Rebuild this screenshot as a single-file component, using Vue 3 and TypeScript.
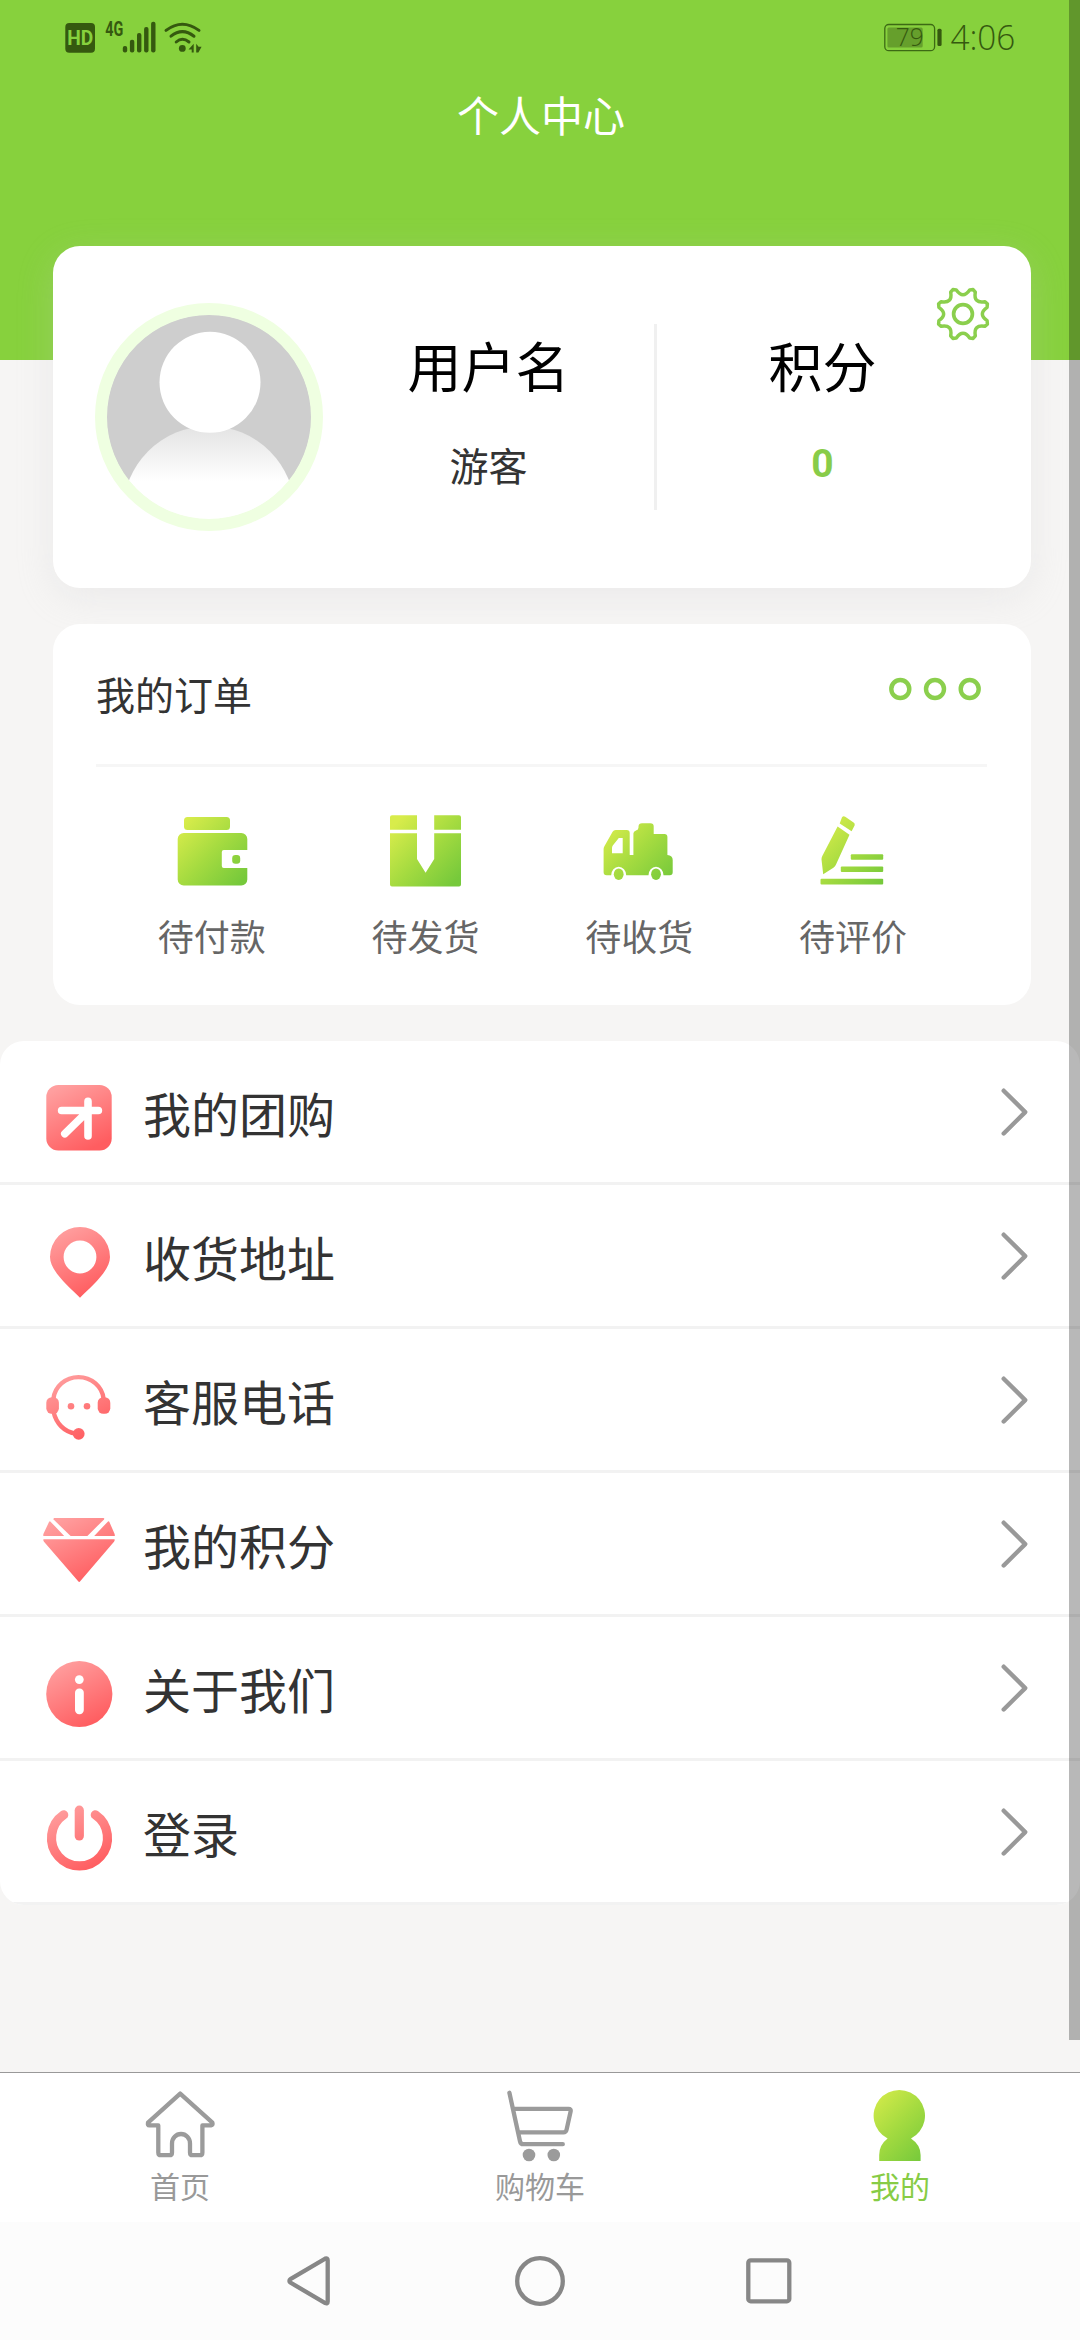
<script setup lang="ts">
interface Entry {
  key: string
  label: string
}

const orders: Entry[] = [
  { key: 'pay', label: '待付款' },
  { key: 'ship', label: '待发货' },
  { key: 'receive', label: '待收货' },
  { key: 'review', label: '待评价' },
]

const menu: Entry[] = [
  { key: 'group', label: '我的团购' },
  { key: 'address', label: '收货地址' },
  { key: 'service', label: '客服电话' },
  { key: 'points', label: '我的积分' },
  { key: 'about', label: '关于我们' },
  { key: 'login', label: '登录' },
]

const tabs: Entry[] = [
  { key: 'home', label: '首页' },
  { key: 'cart', label: '购物车' },
  { key: 'mine', label: '我的' },
]
const activeTab = 'mine'

// Eight rounded teeth joined by concave notches.
function gearPath(center: number): string {
  const point = (deg: number, r: number): string => {
    const a = (deg * Math.PI) / 180
    return `${(center + r * Math.cos(a)).toFixed(2)} ${(center + r * Math.sin(a)).toFixed(2)}`
  }
  let d = ''
  for (let k = 0; k < 8; k++) {
    const a = 22.5 + 45 * k
    d += `${k === 0 ? 'M' : 'L'}${point(a - 7, 25)}L${point(a, 26.4)}L${point(a + 7, 25)}`
    d += `Q${point(a + 22.5, 14.6)} ${point(a + 38, 25)}`
  }
  return d + 'Z'
}
const gear = gearPath(30)
</script>

<template>
  <div class="page">
    <svg class="defs" width="0" height="0" aria-hidden="true">
      <defs>
        <linearGradient id="g-green" gradientUnits="userSpaceOnUse" x1="6" y1="8" x2="66" y2="66">
          <stop offset="0" stop-color="#d8ec4b" />
          <stop offset="0.5" stop-color="#a5db40" />
          <stop offset="1" stop-color="#76c93b" />
        </linearGradient>
        <linearGradient id="g-red" gradientUnits="userSpaceOnUse" x1="18" y1="4" x2="50" y2="66">
          <stop offset="0" stop-color="#ff9f9f" />
          <stop offset="1" stop-color="#ff5d60" />
        </linearGradient>
        <linearGradient id="g-body" x1="0" y1="0" x2="0" y2="1">
          <stop offset="0" stop-color="#e3e3e3" />
          <stop offset="0.32" stop-color="#ffffff" />
        </linearGradient>
      </defs>
    </svg>

    <header class="header">
      <div class="status">
        <svg width="140" height="76" viewBox="65 0 140 76">
          <g fill="#35590f">
            <rect x="65.3" y="23" width="29.7" height="29.7" rx="4" />
            <text class="hd" x="67.2" y="45" textLength="26" lengthAdjust="spacingAndGlyphs">HD</text>
            <text class="net" x="105.2" y="36" textLength="18" lengthAdjust="spacingAndGlyphs">4G</text>
            <rect x="122.8" y="46" width="4.4" height="6.4" rx="2" />
            <rect x="129.9" y="39.7" width="4.4" height="12.7" rx="2" />
            <rect x="137" y="33" width="4.4" height="19.4" rx="2" />
            <rect x="144.1" y="27" width="4.4" height="25.4" rx="2" />
            <rect x="151.1" y="21.7" width="4.4" height="30.7" rx="2" />
            <circle cx="182.3" cy="48.4" r="3.4" />
            <path d="M193.7 43.8v8.6h-2v-3h-3.2zM196.2 43.8l2.4 3h3l-3.2 5.6h-2.2z" />
          </g>
          <g fill="none" stroke="#35590f" stroke-width="3" stroke-linecap="round">
            <path d="M166 30.4Q182.3 18 199 30.4" />
            <path d="M171 36.2Q182.3 27 194 36.2" />
            <path d="M176.2 42Q182.3 36.6 189 42" />
          </g>
        </svg>
        <svg width="150" height="76" viewBox="880 0 150 76">
          <rect x="884.8" y="24.5" width="49.8" height="26.2" rx="4" fill="none" stroke="#3c6a14" stroke-width="1.3" />
          <rect x="887.4" y="27.6" width="35.3" height="20" rx="1.5" fill="#669f2c" />
          <rect x="937.4" y="28.7" width="4.2" height="17.4" rx="1.5" fill="#35590f" />
          <text class="thin" x="895.8" y="46.2" font-size="26" textLength="28" lengthAdjust="spacingAndGlyphs">79</text>
          <text class="thin" x="950.4" y="50" font-size="34" textLength="65" lengthAdjust="spacingAndGlyphs">4:06</text>
        </svg>
      </div>
      <h1 class="title">个人中心</h1>
    </header>

    <main class="content">
      <section class="profile">
        <svg class="avatar" width="228" height="228" viewBox="0 0 228 228">
          <clipPath id="avatar-clip"><circle cx="114" cy="114" r="102.5" /></clipPath>
          <g clip-path="url(#avatar-clip)">
            <rect width="228" height="228" fill="#cecece" />
            <circle cx="114" cy="209" r="86" fill="url(#g-body)" />
            <circle cx="115" cy="79.3" r="50.5" fill="#fff" />
          </g>
          <circle cx="114" cy="114" r="108" fill="none" stroke="#efffe1" stroke-width="12" />
        </svg>
        <div class="stat">
          <div class="stat-name">用户名</div>
          <div class="stat-value">游客</div>
        </div>
        <div class="stat-divider"></div>
        <div class="stat">
          <div class="stat-name">积分</div>
          <div class="stat-value number">0</div>
        </div>
        <svg class="gear" width="60" height="60" viewBox="0 0 60 60" fill="none" stroke="#8bcf4d">
          <path :d="gear" stroke-width="3.5" stroke-linejoin="round" />
          <circle cx="30" cy="30" r="9.4" stroke-width="3.7" />
        </svg>
      </section>

      <section class="orders">
        <div class="orders-head">
          <span>我的订单</span>
          <svg class="more" width="96" height="24" viewBox="0 0 96 24" fill="none" stroke="#8bcf4d" stroke-width="4.4">
            <circle cx="13.3" cy="12" r="9" />
            <circle cx="48" cy="12" r="9" />
            <circle cx="82.7" cy="12" r="9" />
          </svg>
        </div>
        <div class="orders-list">
          <div v-for="item in orders" :key="item.key" class="order">
            <svg width="72" height="72" viewBox="0 0 72 72" fill="url(#g-green)">
              <template v-if="item.key === 'pay'">
                <rect x="8" y="2" width="46" height="13" rx="3.5" />
                <path d="M7.7 18H65.3a6 6 0 0 1 6 6V35H47.8a2 2 0 0 0-2 2V51a2 2 0 0 0 2 2H71.3V64.5a6 6 0 0 1-6 6H7.7a6 6 0 0 1-6-6V24a6 6 0 0 1 6-6z" />
                <rect x="56.2" y="40" width="8" height="8.8" rx="3.2" />
              </template>
              <template v-else-if="item.key === 'ship'">
                <path d="M2 .3H27V14.7H0V2.3a2 2 0 0 1 2-2zM44.2 .3H69a2 2 0 0 1 2 2V14.7H44.2z" />
                <path d="M0 18.2H27V44L35.6 57.7 44.2 44V18.2H71V69.6a2 2 0 0 1-2 2H2a2 2 0 0 1-2-2z" />
              </template>
              <template v-else-if="item.key === 'receive'">
                <path
                  fill-rule="evenodd"
                  d="M.6 34Q.6 32.6 1.4 31.2L9.6 16.8Q10.6 15 12.6 15H23.7Q26.7 15 26.7 18V40H30.4V18.6Q30.4 16.6 33 15.6 35.5 15 35.5 12.6V11.6Q35.7 8.3 39 8.3H47.4Q50.7 8.3 50.7 11.6V19H61.4Q64.4 19 64.4 22V40Q69.7 40.6 69.7 45V57.3Q69.7 60.3 66.7 60.3H60.5A7.5 8.6 0 1 0 45.5 60.3H23.2A7.5 8.6 0 1 0 8.2 60.3H3.6Q.6 60.3.6 57.3zM15.8 23 9.8 30.4Q9 31.6 9 33V38.3H19.7V23z"
                />
                <ellipse cx="15.7" cy="59.2" rx="4.9" ry="5.8" />
                <ellipse cx="53" cy="59.2" rx="4.9" ry="5.8" />
              </template>
              <template v-else>
                <path d="M25 2.2Q26.4.6 28.2 1.8L36.6 7.4Q38.3 8.6 37.6 10.4L34.6 16.3 22.7 8.5z" />
                <path d="M20.6 11.4 32.5 19.7 19 49.6Q18.3 51.6 16.4 52.8L6.2 59.3 4.5 44.6Q4.4 42.6 5.3 41z" />
                <rect x="33.8" y="39.2" width="32.4" height="5.6" rx="1" />
                <rect x="23.8" y="51.4" width="42.4" height="5.6" rx="1" />
                <rect x="3.5" y="63.8" width="62.7" height="5.8" rx="1" />
              </template>
            </svg>
            <span class="order-label">{{ item.label }}</span>
          </div>
        </div>
      </section>

      <nav class="menu">
        <a v-for="item in menu" :key="item.key" class="row">
          <svg class="row-icon" width="72" height="72" viewBox="0 0 72 72">
            <template v-if="item.key === 'group'">
              <rect x="3.3" y="3" width="65.4" height="65.4" rx="12" fill="url(#g-red)" />
              <path d="M18.6 28.5H55.4M45 19.4V54M42.5 31.5 21.8 51.8" fill="none" stroke="#fff" stroke-width="7.6" stroke-linecap="round" />
            </template>
            <path
              v-else-if="item.key === 'address'"
              fill="url(#g-red)"
              fill-rule="evenodd"
              d="M37 71.7C25 60 7 44.5 7 31A30 30 0 0 1 67 31C67 44.5 49 60 37 71.7zM37 14.6A16.4 16.4 0 1 0 37 47.4 16.4 16.4 0 0 0 37 14.6z"
            />
            <template v-else-if="item.key === 'service'">
              <g fill="url(#g-red)">
                <rect x="3.3" y="27.2" width="12.6" height="16.6" rx="5.5" />
                <rect x="54.7" y="27.2" width="12.6" height="16.6" rx="5.5" />
                <circle cx="28" cy="36.2" r="3.3" />
                <circle cx="44" cy="36.2" r="3.3" />
                <circle cx="35.7" cy="63.8" r="5.9" />
              </g>
              <g fill="none" stroke="url(#g-red)" stroke-width="4.4">
                <path d="M10.4 29A25.2 24 0 0 1 60.6 29" />
                <path d="M10.6 42C13 53 21 62 33 63.6" />
              </g>
            </template>
            <g v-else-if="item.key === 'points'" fill="url(#g-red)">
              <path d="M11.4 4H60.4Q61.8 4.2 61 5.4L44.4 22H27.6L10.6 5.6Q10.2 4.2 11.4 4z" />
              <path d="M7.3 7.4 21.2 22H.4Q0 20.6.6 19.4L6 8Q6.6 7 7.3 7.4zM65 7.4Q66 7 66.4 8L71.4 19.4Q72 20.6 71.8 22H51.2z" />
              <path d="M.4 25.2H71.6Q72 26.6 71 27.8L37.2 67.2Q36.2 68.6 35.2 67.2L1 27.8Q0 26.6.4 25.2z" />
            </g>
            <template v-else-if="item.key === 'about'">
              <circle cx="36.3" cy="36" r="33.1" fill="url(#g-red)" />
              <circle cx="36.3" cy="21.6" r="4.4" fill="#fff" />
              <rect x="32" y="30.6" width="8.8" height="25.6" rx="4.2" fill="#fff" />
            </template>
            <g v-else fill="none" stroke="url(#g-red)" stroke-width="9.2" stroke-linecap="round">
              <path d="M20.7 12.8A28 28 0 1 0 52.3 12.8" />
              <path d="M36.3 8.2V34" />
            </g>
          </svg>
          <span class="row-label">{{ item.label }}</span>
          <svg class="chevron" width="34" height="52" viewBox="0 0 34 52" fill="none" stroke="#999" stroke-width="4.4" stroke-linecap="round" stroke-linejoin="round">
            <path d="M5.7 4.7 27.2 26.1 5.7 47.5" />
          </svg>
        </a>
      </nav>
    </main>

    <footer class="tabbar">
      <a v-for="tab in tabs" :key="tab.key" class="tab" :class="{ active: tab.key === activeTab }">
        <svg width="72" height="76" viewBox="0 0 72 76">
          <path
            v-if="tab.key === 'home'"
            fill="none"
            stroke="#9b9b9b"
            stroke-width="4.3"
            stroke-linejoin="round"
            d="M36.2 7.6 4 36.6Q3.4 39.4 5.4 39.4H14.3V66.4Q14.3 69.2 17 69.2H25.4Q28 69.2 28 66.4V57.4A9 9.4 0 0 1 46 57.4V66.4Q46 69.2 48.6 69.2H55.8Q58.4 69.2 58.4 66.4V39.4H67Q69.2 39 68.4 36.6z"
          />
          <g v-else-if="tab.key === 'cart'">
            <path
              fill="none"
              stroke="#9b9b9b"
              stroke-width="4.3"
              stroke-linecap="round"
              stroke-linejoin="round"
              d="M5.4 6.8 16 55.2Q16.6 58.2 19.4 58.2H58.8M10 22.8H64.6Q67.2 22.8 66.6 25.4L62.6 43.6Q62 46.4 59.4 46.4H15.4"
            />
            <circle cx="25" cy="69" r="6.3" fill="#9b9b9b" />
            <circle cx="49.8" cy="69" r="6.3" fill="#9b9b9b" />
          </g>
          <path
            v-else
            fill="url(#g-green)"
            d="M23.6 52.6A25.7 25.7 0 1 1 47 52.6Q56.6 59 56.6 69V75H15.2V69Q15.2 59 23.6 52.6z"
          />
        </svg>
        <span>{{ tab.label }}</span>
      </a>
    </footer>

    <div class="sysnav">
      <svg width="52" height="52" viewBox="0 0 52 52"><path d="M5.4 24.2 40.2 3.6Q42.7 2.6 42.7 5.2V46.4Q42.7 49 40.2 48L5.4 27.6Q3.4 25.9 5.4 24.2z" /></svg>
      <svg width="52" height="52" viewBox="0 0 52 52"><circle cx="26" cy="26" r="22.8" /></svg>
      <svg width="52" height="52" viewBox="0 0 52 52"><rect x="5.3" y="5.3" width="41" height="41" rx="2.4" /></svg>
    </div>

    <div class="scrollbar"></div>
  </div>
</template>

<style>
body {
  margin: 0;
}
</style>

<style scoped>
.page {
  position: relative;
  display: flex;
  flex-direction: column;
  width: 1080px;
  height: 2340px;
  overflow: hidden;
  background: #f6f5f4;
  color: #333;
  font-family: 'Noto Sans CJK SC', sans-serif;
}

svg {
  display: block;
  flex: none;
}

.defs {
  position: absolute;
}

.header {
  flex: none;
  height: 360px;
  background: #87d13d;
}

.status {
  display: flex;
  justify-content: space-between;
  height: 76px;
  padding: 0 50px 0 65px;
}

.hd {
  fill: #87d13d;
  font: 700 20px Roboto, sans-serif;
}

.net {
  font: 700 20px Roboto, sans-serif;
}

.thin {
  fill: #35590f;
  font-family: 'Open Sans', 'Noto Sans', sans-serif;
  font-weight: 300;
}

.title {
  margin: 8px 0 0 2px;
  color: #fff;
  font-size: 42px;
  font-weight: 400;
  line-height: 60px;
  text-align: center;
}

.content {
  display: flex;
  flex: 1;
  flex-direction: column;
}

.profile {
  position: relative;
  display: flex;
  flex: none;
  height: 342px;
  margin: -114px 49px 0 53px;
  padding-right: 43px;
  padding-left: 42px;
  box-sizing: border-box;
  border-radius: 27px;
  background: #fff;
  box-shadow: 0 9px 36px rgba(199, 200, 206, 0.24);
}

.avatar {
  margin-top: 57px;
}

.stat {
  flex: 1;
  padding-top: 89px;
  text-align: center;
}

.stat-name {
  color: #000;
  font-size: 54px;
  line-height: 60px;
}

.stat-value {
  margin-top: 44px;
  font-size: 39px;
  line-height: 50px;
}

.number {
  color: #88cc49;
  font-family: Roboto, sans-serif;
  font-weight: 700;
}

.stat-divider {
  width: 3px;
  height: 186px;
  margin-top: 78px;
  background: #f0f0f0;
}

.gear {
  position: absolute;
  top: 38px;
  right: 38px;
}

.orders {
  flex: none;
  height: 381px;
  margin: 36px 49px 0 53px;
  padding: 0 44px 0 43px;
  box-sizing: border-box;
  border-radius: 27px;
  background: #fff;
  position: relative;
}

.orders-head {
  display: flex;
  align-items: center;
  justify-content: space-between;
  height: 140px;
  border-bottom: 3px solid #f6f6f6;
  font-size: 39px;
  line-height: 58px;
}

.orders-head span {
  margin-bottom: 2px;
}

.more {
  margin: 0 4px 11px 0;
}

.orders-list {
  display: flex;
  padding: 48px 27px 0 9px;
}

.order {
  display: flex;
  flex: 1;
  flex-direction: column;
  align-items: center;
}

.order-label {
  margin-top: 22px;
  color: #666;
  font-size: 36px;
  line-height: 52px;
}

.menu {
  flex: none;
  margin-top: 36px;
  overflow: hidden;
  border-radius: 24px;
  background: #fff;
}

.row {
  display: flex;
  align-items: center;
  height: 141px;
  padding: 0 48px 0 43px;
  border-bottom: 3px solid #f2f2f2;
}

.row-icon {
  margin-top: 13px;
}

.row-label {
  flex: 1;
  margin: 0 0 0 28px;
  font-size: 48px;
  line-height: 70px;
}

.tabbar {
  display: flex;
  flex: none;
  height: 150px;
  box-sizing: border-box;
  border-top: 1px solid #999;
  background: #fff;
}

.tab {
  display: flex;
  flex: 1;
  flex-direction: column;
  align-items: center;
  padding-top: 13px;
  color: #999;
  font-size: 30px;
  line-height: 44px;
}

.tab span {
  margin-top: 1px;
}

.tab.active {
  color: #87cc45;
}

.sysnav {
  display: flex;
  flex: none;
  justify-content: center;
  gap: 177px;
  height: 118px;
  padding-top: 33px;
  box-sizing: border-box;
  background: #fcfcfc;
  fill: none;
  stroke: #878787;
  stroke-width: 4.3;
}

.scrollbar {
  position: absolute;
  top: 0;
  right: 0;
  width: 11px;
  height: 2040px;
  background: rgba(0, 0, 0, 0.28);
}
</style>
